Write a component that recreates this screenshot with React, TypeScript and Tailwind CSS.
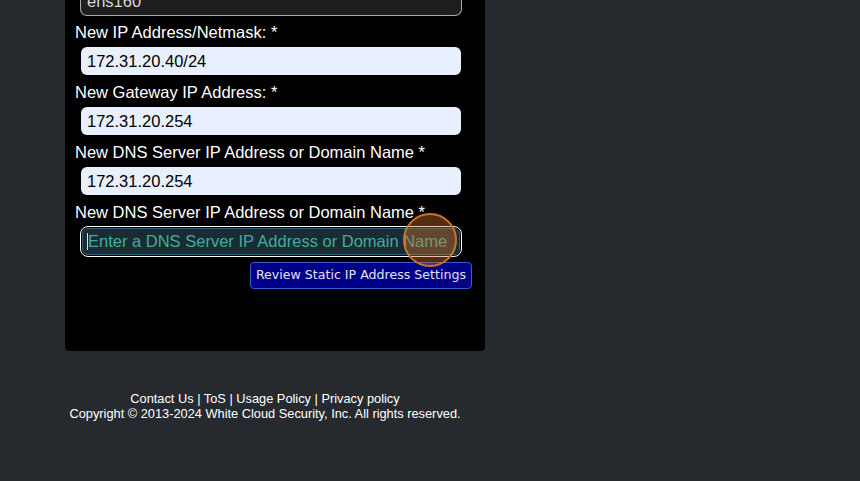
import React from "react";

const font = { fontFamily: '"Liberation Sans", Arial, sans-serif' };

function Label({ children }: { children: React.ReactNode }) {
  return <div className="text-[16.5px] leading-[19px] text-white pl-[10px]">{children}</div>;
}

function Field({ value }: { value: string }) {
  return (
    <div className="ml-[16px] mr-[24px] mt-[5px] mb-[8px] h-[28px] rounded-[6px] bg-[#e8f0fe] flex items-center pl-[6px] text-[16.5px] text-black">
      {value}
    </div>
  );
}

export default function App() {
  return (
    <div className="w-[860px] h-[481px] bg-[#262a2f] overflow-hidden relative" style={font}>
      <div className="ml-[65px] w-[420px] h-[351px] bg-black rounded-b-[4px] relative">
        <div className="ml-[15px] mr-[23px] h-[16px] rounded-b-[7px] border border-t-0 border-[#a8a8a8] bg-[#1e1e1e] relative overflow-hidden">
          <div className="absolute left-[6px] -top-[11px] text-[16.5px] text-[#d8d8d8]">ens160</div>
        </div>
        <div className="pt-[7px]">
          <Label>New IP Address/Netmask: *</Label>
          <Field value="172.31.20.40/24" />
          <Label>New Gateway IP Address: *</Label>
          <Field value="172.31.20.254" />
          <Label>New DNS Server IP Address or Domain Name *</Label>
          <Field value="172.31.20.254" />
          <Label>New DNS Server IP Address or Domain Name *</Label>
          <div className="ml-[15px] mr-[23px] mt-[4px] h-[31px] rounded-[8px] border border-white p-[1px]">
            <div className="h-full rounded-[6px] border border-[#2e6478] bg-[#1b2b33] flex items-center pl-[4px] text-[16.5px] text-[#3fae9f]">
              <span className="inline-block w-[1px] h-[17px] bg-[#e0e0e0]" />
              Enter a DNS Server IP Address or Domain Name
            </div>
          </div>
          <div className="flex justify-end mr-[13px] mt-[5px]">
            <div
              className="h-[27px] px-[5px] rounded-[4px] border border-[#3a5cd0] bg-[#000088] text-[#e2e2f2] flex items-center"
              style={{ fontFamily: '"DejaVu Sans", Verdana, sans-serif', fontSize: "12.6px" }}
            >
              Review Static IP Address Settings
            </div>
          </div>
        </div>
      </div>
      <div className="w-[530px] mt-[40px] text-center text-white text-[12.8px] leading-[15px]">
        <div>Contact Us | ToS | Usage Policy | Privacy policy</div>
        <div>Copyright © 2013-2024 White Cloud Security, Inc. All rights reserved.</div>
      </div>
      <div className="absolute left-[403px] top-[213px] w-[54px] h-[54px] rounded-full border-2 border-[#c8742e] bg-[#d0702a]/40" />
    </div>
  );
}
